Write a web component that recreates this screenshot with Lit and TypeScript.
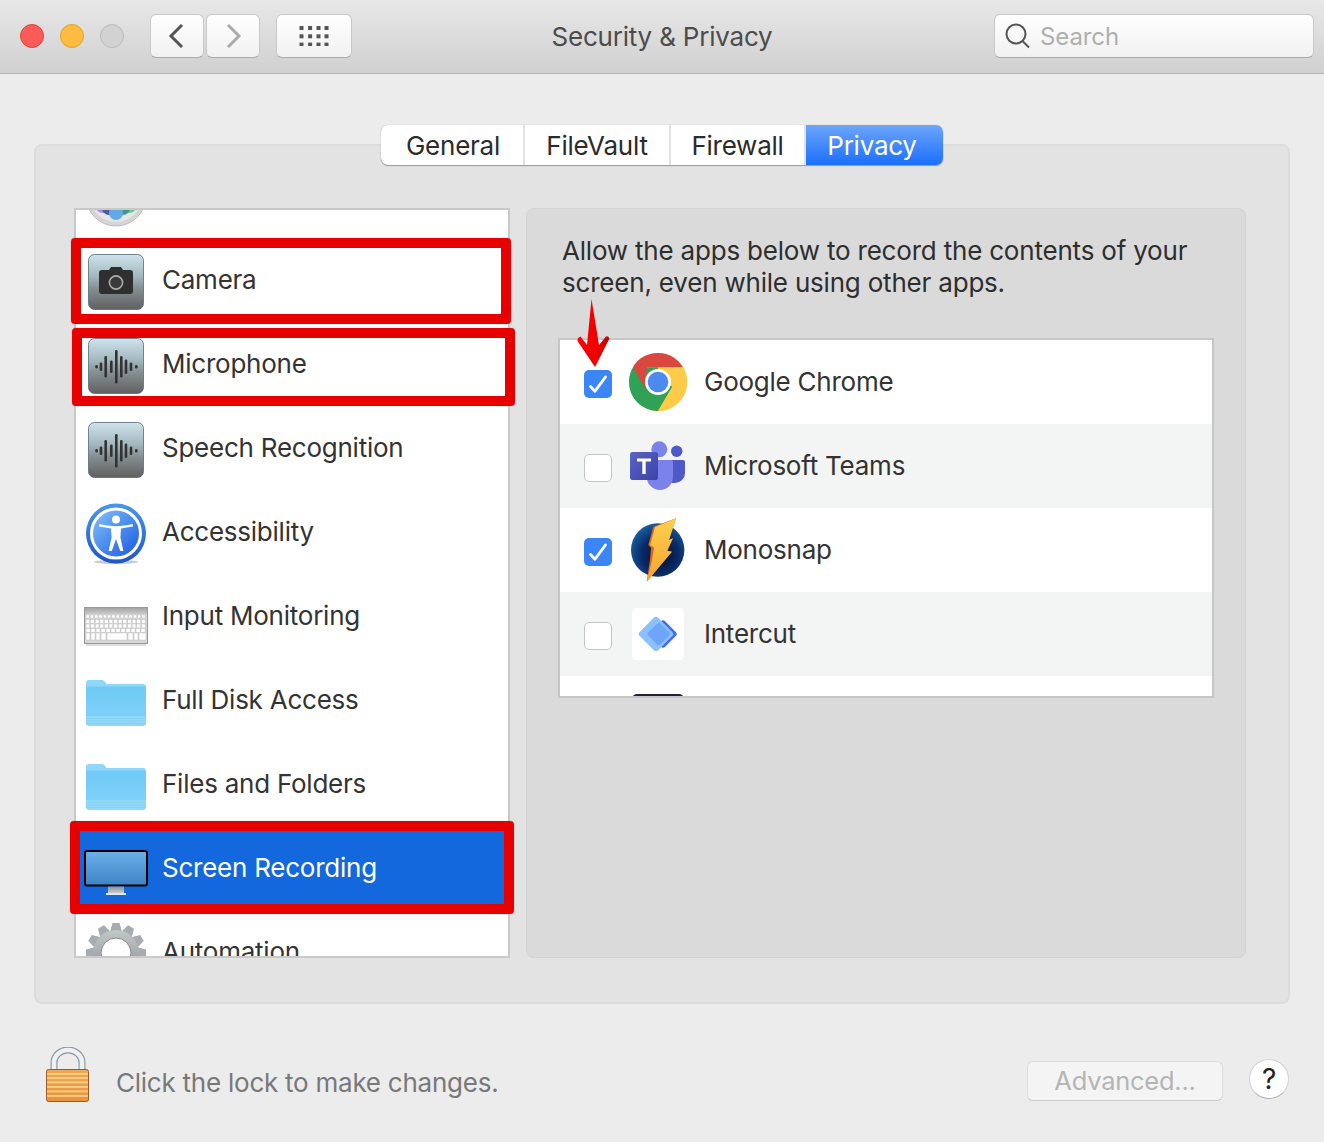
import { LitElement, html, css, svg } from "lit";
import { customElement } from "lit/decorators.js";

const tile = (id: string, inner: unknown) => html`<svg class="ic" width="64" height="64" viewBox="0 0 64 64">
  <defs><linearGradient id=${id} x1="0" y1="0" x2="0" y2="1">
    <stop offset="0" stop-color="#cfe3ec"/><stop offset=".4" stop-color="#a3b7bf"/><stop offset=".62" stop-color="#858f92"/><stop offset="1" stop-color="#606060"/>
  </linearGradient></defs>
  <rect x="4.5" y="6.5" width="55" height="55" rx="6" fill="url(#${id})" stroke="#5d6f80" stroke-opacity=".85"/>
  ${inner}
</svg>`;

const waveBars = [[12.6, 1], [17, 6], [21.7, 19], [27.3, 10], [32.3, 31], [37.3, 19], [42, 12], [47, 6], [52.3, 1]];
const wave = (id: string) =>
  tile(id, waveBars.map(([x, h]) => svg`<rect x=${x - 1.3} y=${34.7 - h / 2 - 1.3} width="2.6" height=${h + 2.6} rx="1.3" fill="#333"/>`));

const camera = tile("cam", svg`
  <path d="M15 25a3 3 0 0 1 3-3h7l2-3h10l2 3h7a3 3 0 0 1 3 3v18a3 3 0 0 1-3 3H18a3 3 0 0 1-3-3z" fill="#2f2f2f"/>
  <circle cx="32" cy="34.5" r="6.6" fill="#3a3a3a" stroke="#a9a9a9" stroke-width="1.6"/>`);

const access = html`<svg class="ic" width="64" height="64" viewBox="0 0 64 64">
  <defs>
    <linearGradient id="acg" x1="0" y1="0" x2="1" y2="1"><stop offset="0" stop-color="#8cc4f8"/><stop offset=".5" stop-color="#4a8df0"/><stop offset="1" stop-color="#1b54d8"/></linearGradient>
    <linearGradient id="acr" x1="0" y1="0" x2="0" y2="1"><stop offset="0" stop-color="#4a97ea"/><stop offset="1" stop-color="#1d55c9"/></linearGradient>
  </defs>
  <ellipse cx="32" cy="62" rx="22" ry="2" fill="#999" opacity=".5"/>
  <circle cx="32" cy="33.5" r="30" fill="url(#acr)"/>
  <circle cx="32" cy="33.5" r="24.5" fill="url(#acg)" stroke="#fff" stroke-width="3"/>
  <circle cx="32" cy="19.5" r="4" fill="#fff"/>
  <path d="M15 26.5l12 2 .6 9-3 13.5h3.2L32 39l4.2 12h3.2l-3-13.5.6-9 12-2 -.4-2.4C42 25.5 37 26.2 32 26.2S22 25.5 15.4 24.1z" fill="#fff"/>
</svg>`;

const keys = () => {
  const out: unknown[] = [];
  const rows = [[31, 3, 14], [35.5, 4, 13], [40, 4, 13], [44.5, 4, 12], [49, 4, 0]];
  for (const [y, h, n] of rows) {
    if (n === 0) {
      [[2, 4], [7, 4], [12, 4], [17, 5], [23, 20], [44, 5], [50, 4], [55, 7]].forEach(([x, w]) =>
        out.push(svg`<rect x=${x} y=${y} width=${w} height=${h + 3} fill="#fdfdfd" stroke="#b8b8b8" stroke-width=".4"/>`));
    } else {
      const w = 60 / n;
      for (let i = 0; i < n; i++)
        out.push(svg`<rect x=${2 + i * w} y=${y} width=${w - 0.9} height=${h} fill="#fdfdfd" stroke="#b8b8b8" stroke-width=".4"/>`);
    }
  }
  return out;
};
const keyboard = html`<svg class="ic" width="64" height="64" viewBox="0 0 64 64">
  <defs><linearGradient id="kbt" x1="0" y1="0" x2="0" y2="1"><stop offset="0" stop-color="#a4a4a4"/><stop offset="1" stop-color="#cacaca"/></linearGradient></defs>
  <rect x="2" y="60" width="60" height="2" fill="#bbb" opacity=".5"/>
  <rect x=".5" y="23.5" width="63" height="36" fill="#d6d6d6" stroke="#9a9a9a"/>
  <rect x="1" y="24" width="62" height="6" fill="url(#kbt)"/>
  ${keys()}
</svg>`;

const folder = (id: string) => html`<svg class="ic" width="64" height="64" viewBox="0 0 64 64">
  <defs><linearGradient id=${id} x1="0" y1="0" x2="0" y2="1"><stop offset="0" stop-color="#6fcaf6"/><stop offset="1" stop-color="#7dd1f8"/></linearGradient></defs>
  <path d="M2 15a3 3 0 0 1 3-3h13a3 3 0 0 1 2.2 1l2.6 3H59a3 3 0 0 1 3 3v34H2z" fill="#8fd8fa"/>
  <path d="M2 20.5a2 2 0 0 1 2-2h56a2 2 0 0 1 2 2V48H2z" fill="url(#${id})"/>
  <path d="M2 48h60v7a3 3 0 0 1-3 3H5a3 3 0 0 1-3-3z" fill="#93d9f7"/>
  <path d="M2 50.5h60M2 53h60M2 55.5h60" stroke="#7fcdf0" stroke-width=".7" fill="none"/>
</svg>`;

const monitor = html`<svg class="ic" width="64" height="64" viewBox="0 0 64 64">
  <defs><linearGradient id="mon" x1="0" y1="0" x2="0" y2="1"><stop offset="0" stop-color="#6cb1ea"/><stop offset="1" stop-color="#3f83c4"/></linearGradient>
  <linearGradient id="std" x1="0" y1="0" x2="0" y2="1"><stop offset="0" stop-color="#8a8f96"/><stop offset="1" stop-color="#c9ced3"/></linearGradient></defs>
  <rect x="1" y="15" width="62" height="34.5" rx="2" fill="url(#mon)" stroke="#000" stroke-width="2"/>
  <rect x="24" y="50.5" width="16" height="6.5" fill="url(#std)"/>
  <rect x="22" y="57" width="20" height="2" fill="#e4e6e8"/>
</svg>`;

const gearTeeth = Array.from({ length: 12 }, (_, i) => i * 30);
const gear = html`<svg class="ic" width="64" height="64" viewBox="0 0 64 64">
  <defs><linearGradient id="gr" x1="0" y1="0" x2="0" y2="1"><stop offset="0" stop-color="#c2c7ca"/><stop offset="1" stop-color="#8c9195"/></linearGradient></defs>
  ${gearTeeth.map((a) => svg`<path d="M28.5 3h7l2.500 9h-12z" fill="#a7acb0" transform="rotate(${a} 32 33)"/>`)}
  <circle cx="32" cy="33" r="23" fill="url(#gr)"/>
  <circle cx="32" cy="33" r="15" fill="#fff" stroke="#85898c"/>
</svg>`;

const photos = html`<svg class="ic" width="64" height="64" viewBox="0 0 64 64">
  <circle cx="32" cy="32" r="30" fill="#d5d5d5" stroke="#bdbdbd"/>
  <circle cx="32" cy="32" r="26" fill="#e6e6e6"/>
  <circle cx="19" cy="41" r="8" fill="#ab90d6"/>
  <circle cx="45" cy="41" r="8" fill="#6ec79a"/>
  <circle cx="25" cy="44" r="7" fill="#4c5c9e"/>
  <circle cx="39" cy="44" r="7" fill="#3f9a8e"/>
  <circle cx="32" cy="49" r="7" fill="#62a9e6"/>
</svg>`;

const chrome = html`<svg class="ic" width="60" height="60" viewBox="0 0 60 60">
  <circle cx="30" cy="30" r="29" fill="#fbc944"/>
  <path d="M4.900 15.500A29 29 0 0 0 30 59l14-24.500H30z" fill="#2fa257" />
  <path d="M4.900 15.500L17.500 37 30 30 30 15.500z" fill="#2fa257"/>
  <path d="M5 15C10 6.500 19 1 30 1c11 0 20.500 6 25.100 14.500H30l-11 0 -1.500 21.500z" fill="#d9473f"/>
  <path d="M55.100 15.500H30l8 1 6.500 18L30 59A29 29 0 0 0 55.100 15.500z" fill="#fdcb48"/>
  <path d="M17.500 37L30 59 44.500 34.500 30 30z" fill="#2fa257"/>
  <path d="M44.500 34.500L30 59A29 29 0 0 0 55.100 15.500H30z" fill="#fdcb48"/>
  <circle cx="30" cy="30" r="13" fill="#fff"/>
  <circle cx="30" cy="30" r="10.300" fill="#4b8bf0"/>
</svg>`;

const teams = html`<svg class="ic" width="60" height="60" viewBox="0 0 60 60">
  <defs><linearGradient id="tm" x1="0" y1="0" x2="1" y2="1"><stop offset="0" stop-color="#5b63c6"/><stop offset="1" stop-color="#3d43a8"/></linearGradient></defs>
  <circle cx="48.700" cy="15.300" r="5.700" fill="#4f58c8"/>
  <path d="M37 24h18a2 2 0 0 1 2 2v11a10 10 0 0 1-10 10h-3a7 7 0 0 1-7-7z" fill="#4f58c8"/>
  <circle cx="31.300" cy="13.300" r="8" fill="#7b83eb"/>
  <path d="M18.700 26a2 2 0 0 1 2-2H43a2 2 0 0 1 2 2v15a13 13 0 0 1-13 13 13.300 13.300 0 0 1-13.300-13.300z" fill="#7b83eb"/>
  <rect x="2" y="16" width="28" height="28" rx="2.500" fill="url(#tm)"/>
  <path d="M9 22.500h14v3h-5.300V38h-3.400V25.500H9z" fill="#fff"/>
</svg>`;

const monosnap = html`<svg class="ic over" width="60" height="60" viewBox="0 0 60 60">
  <defs>
    <radialGradient id="ms" cx=".55" cy=".6" r=".7"><stop offset="0" stop-color="#050c2a"/><stop offset=".5" stop-color="#0a2a66"/><stop offset=".85" stop-color="#175a9e"/><stop offset="1" stop-color="#2a93c6"/></radialGradient>
    <linearGradient id="bolt" x1="0" y1="0" x2="0" y2="1"><stop offset="0" stop-color="#ffd04c"/><stop offset="1" stop-color="#f2a432"/></linearGradient>
  </defs>
  <circle cx="29.700" cy="30" r="26.700" fill="url(#ms)"/>
  <path d="M48-1.700L25.300 6.700 20.300 25l2.700 3-1 12-3.300 21.700L43.700 31.700l-4-1 5-12.400-3.700 1.700z" fill="#d9641e"/>
  <path d="M48-1.700L27 7l-5 18 4 2.500-2 12.500-5.300 21.700L44 31.700l-5-1 6-12.400-4 1.700z" fill="url(#bolt)"/>
</svg>`;

const intercut = html`<svg class="ic" width="60" height="60" viewBox="0 0 60 60">
  <rect x="4" y="4" width="52" height="52" rx="5" fill="#fff"/>
  <rect x="24.500" y="19.500" width="21" height="21" rx="3" transform="rotate(45 35 30)" fill="#3d6dfb"/>
  <rect x="15" y="17" width="26" height="26" rx="3" transform="rotate(45 28 30)" fill="#8cc0fd"/>
  <rect x="22.200" y="21.500" width="17" height="17" rx="2" transform="rotate(45 30.700 30)" fill="#6ca5fb"/>
</svg>`;

const slack = html`<svg class="ic" width="60" height="60" viewBox="0 0 60 60"><rect x="4" y="6" width="52" height="52" rx="5" fill="#232338"/></svg>`;

const sideRows = [
  { icon: photos, label: "" },
  { icon: camera, label: "Camera" },
  { icon: wave("w1"), label: "Microphone" },
  { icon: wave("w2"), label: "Speech Recognition" },
  { icon: access, label: "Accessibility" },
  { icon: keyboard, label: "Input Monitoring" },
  { icon: folder("f1"), label: "Full Disk Access" },
  { icon: folder("f2"), label: "Files and Folders" },
  { icon: monitor, label: "Screen Recording", selected: true },
  { icon: gear, label: "Automation" },
];

const apps = [
  { icon: chrome, label: "Google Chrome", on: true },
  { icon: teams, label: "Microsoft Teams", on: false },
  { icon: monosnap, label: "Monosnap", on: true },
  { icon: intercut, label: "Intercut", on: false },
  { icon: slack, label: "", on: false },
];

@customElement("app-root")
export class AppRoot extends LitElement {
  static styles = css`
    :host {
      display: block; position: relative; width: 1324px; height: 1142px; overflow: hidden;
      background: #ececec; color: #333;
      font-family: Inter, "Liberation Sans", sans-serif; font-size: 26px; letter-spacing: -0.24px;
    }
    .ic { display: block; flex: none; }
    .over { overflow: visible; }
    .bar {
      height: 72px; padding: 0 10px 1px; border-bottom: 1px solid #b4b4b4; box-sizing: content-box;
      background: linear-gradient(#e8e8e8, #d0d0d0);
      display: grid; grid-template-columns: 1fr auto 1fr; align-items: center;
    }
    .left { display: flex; align-items: center; padding-left: 10px; }
    .lights { display: flex; gap: 16px; margin-right: 26px; }
    .light { width: 24px; height: 24px; border-radius: 50%; box-sizing: border-box; }
    .red { background: #fc5b57; border: 1px solid #e0443e; }
    .yellow { background: #fdbc40; border: 1px solid #dea123; }
    .gray { background: #d2d2d2; border: 1px solid #b9b9b9; }
    .btn {
      height: 44px; box-sizing: border-box; border-radius: 6px; border: 1px solid #c8c8c8; border-bottom-color: #ababab;
      background: linear-gradient(#fff, #f1f1f1); display: flex; align-items: center; justify-content: center;
    }
    .nav { width: 54px; }
    .nav + .nav { margin-left: 2px; }
    .apps { width: 76px; margin-left: 16px; }
    .title { font-size: 26px; letter-spacing: -0.2px; color: #4c4c4c; text-align: center; }
    .search {
      justify-self: end; width: 320px; height: 44px; box-sizing: border-box; border-radius: 6px;
      border: 1px solid #c8c8c8; border-bottom-color: #ababab; background: linear-gradient(#fff, #f1f1f1);
      display: flex; align-items: center; padding-left: 9px; gap: 10px; color: #afafaf; font-size: 24px; letter-spacing: -0.1px;
    }
    .panel {
      margin: 70px 34px 0; height: 860px; box-sizing: border-box; background: #e3e3e3;
      border: 2px solid #dcdcdc; border-radius: 8px; padding: 0 42px 0 38px;
    }
    .tabs {
      display: grid; grid-template-columns: 144px 146px 135px 137px; width: 562px; height: 40px;
      margin: -21px 0 43px 307px; box-sizing: border-box; border-radius: 7px; background: #fff;
      box-shadow: 0 1px 1px rgba(0,0,0,.3), 0 0 1px rgba(0,0,0,.3);
    }
    .tab { display: flex; align-items: center; justify-content: center; color: #2b2b2b; border-right: 2px solid #e2e2e2; }
    .tab:first-child { border-radius: 7px 0 0 7px; padding-left: 2px; }
    .tab.active {
      background: linear-gradient(#6da5fb, #1a6ffb); color: #fff; border-right: 0; border-radius: 0 7px 7px 0; padding-right: 5px;
    }
    .cols { display: flex; gap: 16px; height: 750px; }
    .list {
      width: 436px; height: 750px; box-sizing: border-box; border: 2px solid #c9c9c9; background: #fff; overflow: hidden; flex: none;
    }
    .scroll { margin-top: -56px; }
    .row { height: 84px; display: flex; align-items: center; padding-left: 8px; gap: 14px; white-space: nowrap; }
    .row span, .app span { margin-bottom: 2px; }
    .row.sel { background: #1268dc; color: #fff; }
    .detail {
      flex: 1; height: 750px; box-sizing: border-box; background: #dadada; border: 1px solid #d3d3d3; border-radius: 8px;
      padding: 26px 31px 0 35px; color: #2e2e2e;
    }
    .desc { margin: 0; line-height: 32px; white-space: nowrap; letter-spacing: -0.2px; }
    .applist {
      margin: 39px 0 0 -4px; height: 360px; box-sizing: border-box; border: 2px solid #c6c6c6; background: #fff; overflow: hidden;
    }
    .app { height: 84px; display: flex; align-items: center; padding-left: 24px; gap: 16px; color: #333; flex: none; }
    .app:nth-child(even) { background: #f3f5f5; }
    .cb {
      width: 28px; height: 28px; box-sizing: border-box; border-radius: 5px; margin-top: 4px; flex: none;
      background: #fff; border: 1.5px solid #c4c4c4; display: flex; align-items: center; justify-content: center;
    }
    .cb.on { background: #3a86f6; border: 0; }
    .footer { display: flex; align-items: flex-start; padding: 0 35px 0 45px; }
    .lock { margin-top: 43px; flex: none; }
    .hint { margin: 63px 0 0 25px; color: #787878; line-height: 32px; flex: 1; }
    .adv {
      margin-top: 57px; width: 196px; height: 40px; padding-bottom: 2px; box-sizing: border-box; border-radius: 6px; background: #f4f4f4;
      border: 1px solid #dcdcdc; border-bottom-color: #c9c9c9; color: #b5b5b5; display: flex; align-items: center; justify-content: center; font-size: 25.5px;
    }
    .help {
      margin: 55px 0 0 26px; width: 40px; height: 40px; box-sizing: border-box; border-radius: 50%; background: #fff;
      border: 1px solid #d2d2d2; border-bottom-color: #b5b5b5; display: flex; align-items: center; justify-content: center; color: #222; font-size: 28px;
    }
    .mark { position: absolute; box-sizing: border-box; border: 10px solid #e60000; border-radius: 4px; pointer-events: none; box-shadow: 0 0 1px rgba(0,0,0,.5); }
    .m1 { left: 71px; top: 238px; width: 440px; height: 86px; }
    .m2 { left: 72px; top: 328px; width: 443px; height: 78px; }
    .m3 { left: 70px; top: 821px; width: 444px; height: 93px; }
    .arrow { position: absolute; left: 574px; top: 297px; }
  `;

  render() {
    return html`
      <div class="bar">
        <div class="left">
          <div class="lights"><div class="light red"></div><div class="light yellow"></div><div class="light gray"></div></div>
          <div class="btn nav"><svg width="20" height="28" viewBox="0 0 20 28"><path d="M15 3L4 14l11 11" fill="none" stroke="#555" stroke-width="3"/></svg></div>
          <div class="btn nav"><svg width="20" height="28" viewBox="0 0 20 28"><path d="M5 3l11 11L5 25" fill="none" stroke="#ababab" stroke-width="3"/></svg></div>
          <div class="btn apps"><svg width="30" height="20" viewBox="0 0 30 20" fill="#555">
            ${[0, 8.3, 16.6].map((y) => [0, 8.6, 17, 25].map((x) => svg`<rect x=${x + 0.5} y=${y} width="4" height="4"/>`))}
          </svg></div>
        </div>
        <div class="title">Security &amp; Privacy</div>
        <div class="search">
          <svg width="26" height="28" viewBox="0 0 26 28"><circle cx="12" cy="12" r="9.500" fill="none" stroke="#555" stroke-width="2"/><path d="M18.500 19L25 25.500" stroke="#555" stroke-width="2"/></svg>
          <span>Search</span>
        </div>
      </div>

      <div class="panel">
        <div class="tabs">
          <div class="tab">General</div><div class="tab">FileVault</div><div class="tab">Firewall</div><div class="tab active">Privacy</div>
        </div>
        <div class="cols">
          <div class="list"><div class="scroll">
            ${sideRows.map((r) => html`<div class="row ${r.selected ? "sel" : ""}">${r.icon}<span>${r.label}</span></div>`)}
          </div></div>
          <div class="detail">
            <p class="desc">Allow the apps below to record the contents of your<br />screen, even while using other apps.</p>
            <div class="applist">
              ${apps.map((a) => html`<div class="app">
                <div class="cb ${a.on ? "on" : ""}">
                  ${a.on ? html`<svg width="20" height="20" viewBox="0 0 20 20"><path d="M2.500 12.500L7 17.200 17.500 3" fill="none" stroke="#fff" stroke-width="2.800" stroke-linecap="round" stroke-linejoin="round"/></svg>` : ""}
                </div>
                ${a.icon}<span>${a.label}</span>
              </div>`)}
            </div>
          </div>
        </div>
      </div>

      <div class="footer">
        <svg class="lock" width="46" height="56" viewBox="0 0 46 56">
          <defs>
            <linearGradient id="lk" x1="0" y1="0" x2="0" y2="1"><stop offset="0" stop-color="#eea753"/><stop offset="1" stop-color="#e8933a"/></linearGradient>
          </defs>
          <path d="M9 23V15.500a14 12.500 0 0 1 28 0V23" fill="none" stroke="#8e98a3" stroke-width="7"/>
          <path d="M9 23V15.500a14 12.500 0 0 1 28 0V23" fill="none" stroke="#eef1f4" stroke-width="4.600"/>
          <rect x="1.500" y="22.500" width="42" height="32" rx="2" fill="url(#lk)" stroke="#9c5a28"/>
          ${[26, 30, 34.500, 39, 43.500, 48].map((y) => svg`<rect x="2" y=${y} width="41" height="1.800" fill="#fcd08a"/>`)}
        </svg>
        <div class="hint">Click the lock to make changes.</div>
        <div class="adv">Advanced...</div>
        <div class="help">?</div>
      </div>

      <div class="mark m1"></div>
      <div class="mark m2"></div>
      <div class="mark m3"></div>
      <svg class="arrow" width="38" height="72" viewBox="0 0 38 72">
        <defs><linearGradient id="ar" x1="0" y1="0" x2="1" y2="0"><stop offset="0" stop-color="#ff0000"/><stop offset=".6" stop-color="#ee0000"/><stop offset="1" stop-color="#c40000"/></linearGradient></defs>
        <path d="M17.500 2L25 48l7-8.500q2-1 3.500 2L21 70 3.500 44q-.5-3 3-4.500L13 48z" fill="url(#ar)"/>
      </svg>
    `;
  }
}
